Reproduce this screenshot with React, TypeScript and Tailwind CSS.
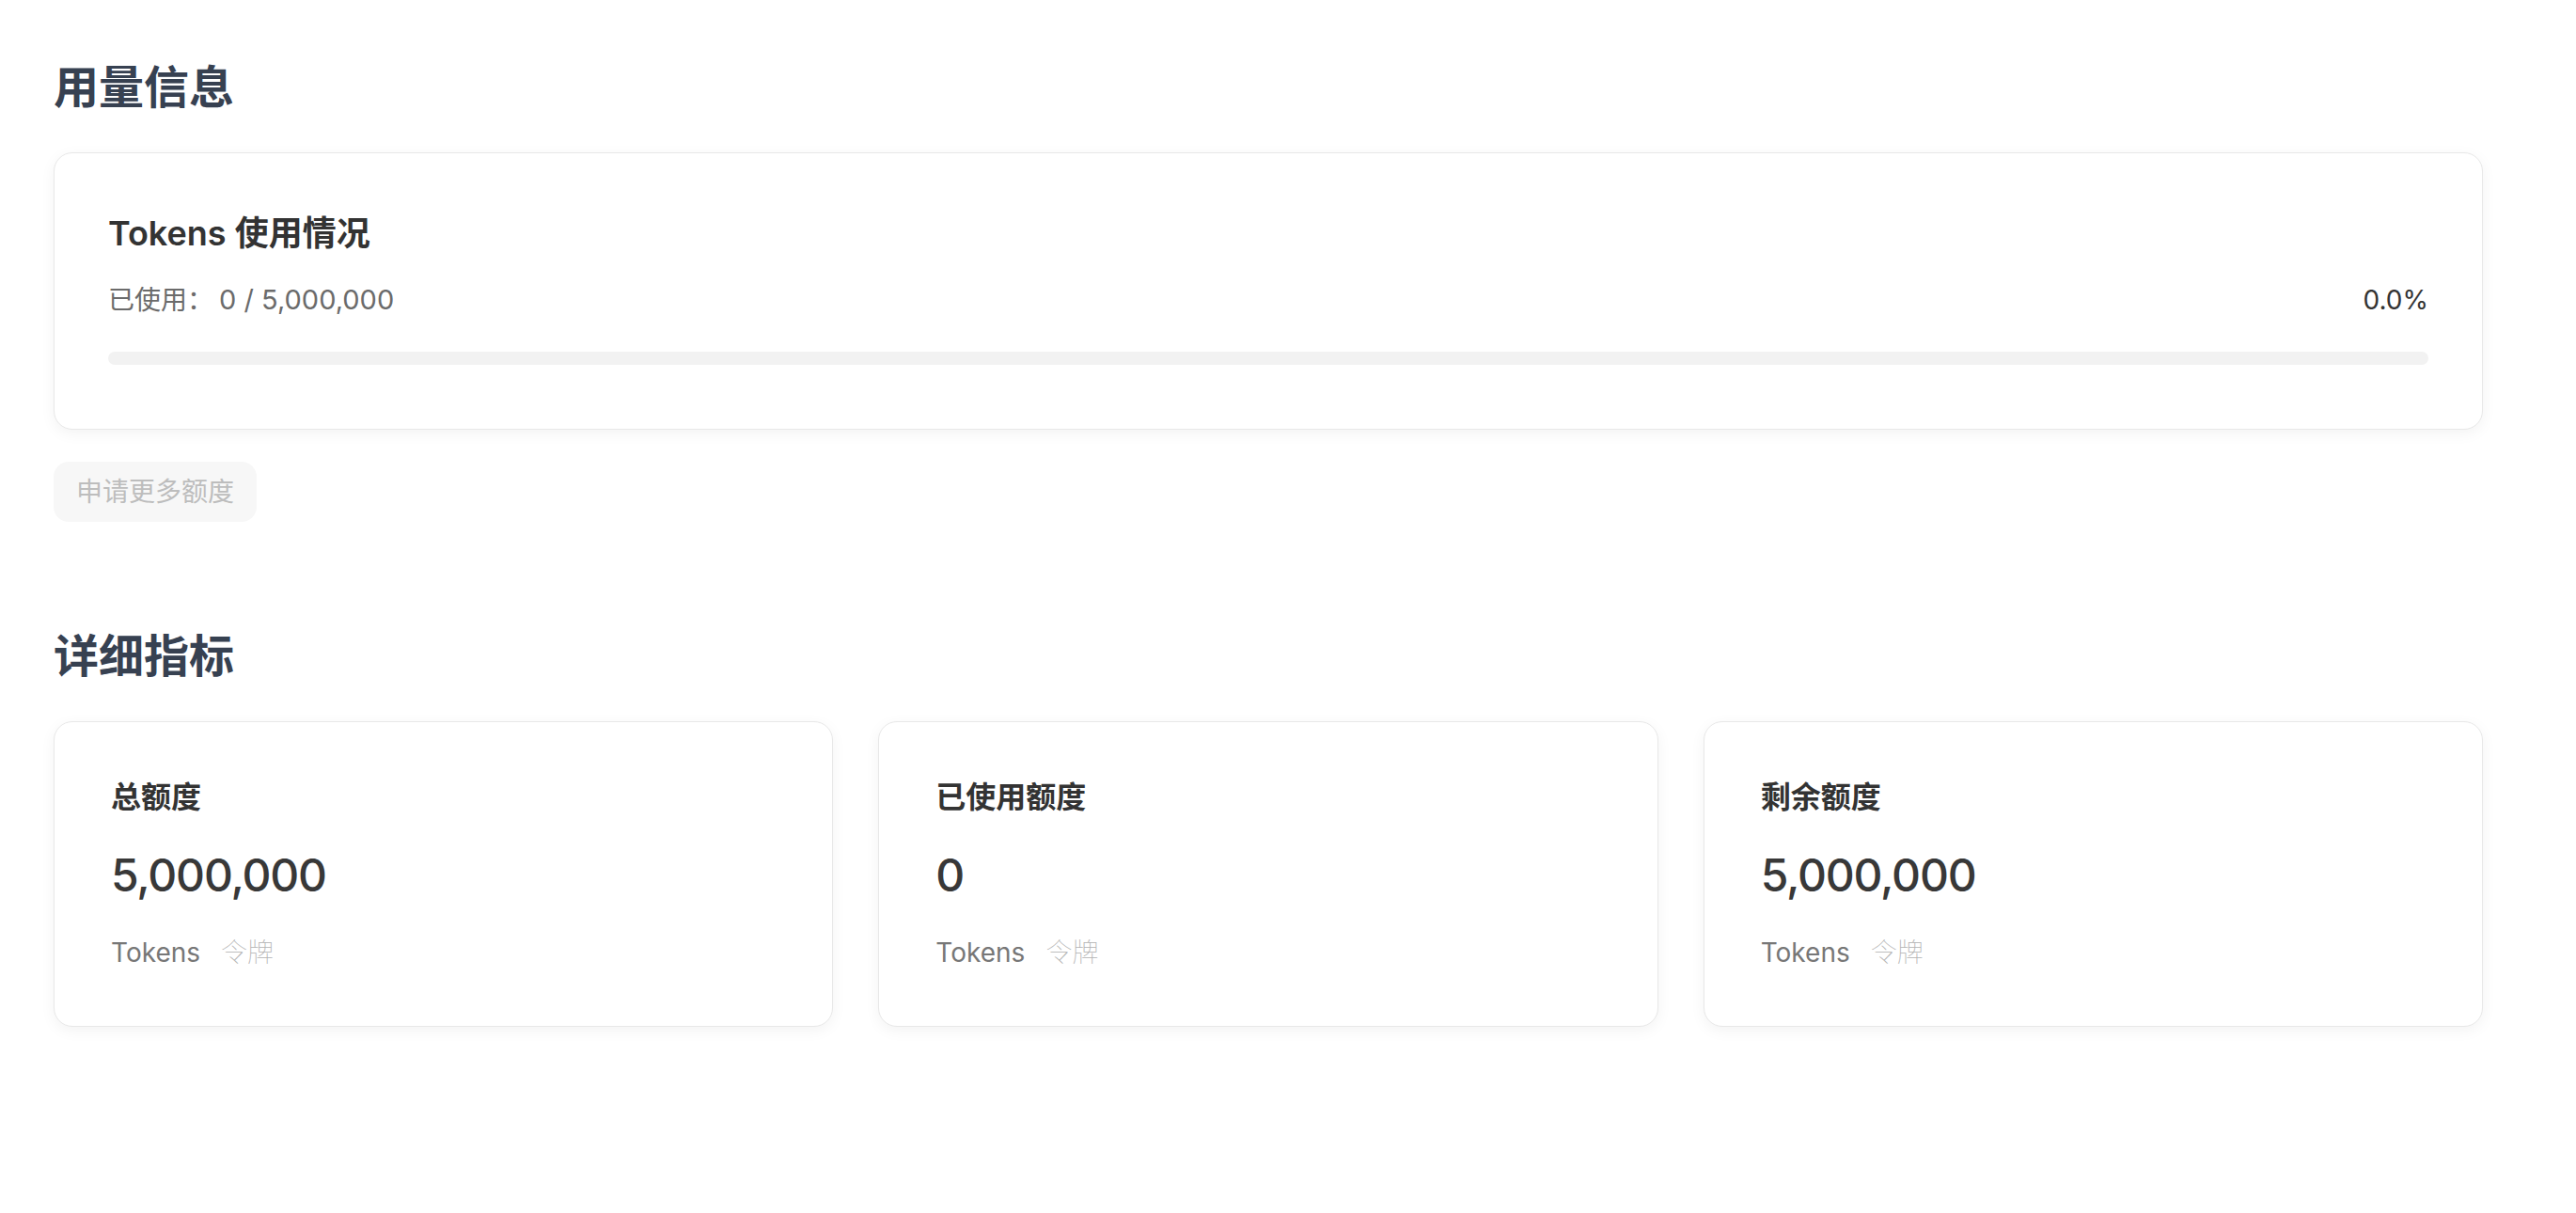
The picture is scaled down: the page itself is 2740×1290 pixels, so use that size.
import React from "react";

const metrics = [
  { label: "总额度", value: "5,000,000" },
  { label: "已使用额度", value: "0" },
  { label: "剩余额度", value: "5,000,000" },
];

function MetricCard({ label, value }: { label: string; value: string }) {
  return (
    <div className="rounded-[20px] border border-[#e8e8e8] bg-white px-[60px] pb-[58px] pt-[60px] shadow-[0_4px_16px_rgba(0,0,0,0.05)]">
      <div className="text-[32px] font-semibold leading-[40px] text-[#333333]">{label}</div>
      <div className="mt-[35px] text-[48px] font-medium leading-[56px] tracking-[-1.2px] text-[#383838]">{value}</div>
      <div className="mt-[34px] flex items-baseline text-[28px] leading-[40px]">
        <span className="text-[#777777]">Tokens</span>
        <span className="ml-[22px] font-thin text-[#b3b3b3]">令牌</span>
      </div>
    </div>
  );
}

export default function App() {
  const usedPct = 0;
  return (
    <div className="min-h-screen bg-white px-[57px] pt-[61px] font-[Inter,'Noto_Sans_CJK_SC',sans-serif]">
      <div className="max-w-[2584px]">
        <h2 className="text-[48px] font-semibold leading-[64px] text-[#374151]">用量信息</h2>

        <div className="mt-[37px] rounded-[20px] border border-[#e8e8e8] bg-white px-[57px] pb-[68px] pt-[61px] shadow-[0_4px_16px_rgba(0,0,0,0.05)]">
          <div className="text-[36px] font-semibold leading-[48px] text-[#333333]">Tokens 使用情况</div>
          <div className="mt-[27px] flex items-center justify-between text-[28px] leading-[40px]">
            <span className="text-[#6b6b6b]">
              已使用：<span className="ml-[6px] text-[29px]">0 / 5,000,000</span>
            </span>
            <span className="text-[#333333]">0.0%</span>
          </div>
          <div className="mt-[35px] h-[14px] w-full overflow-hidden rounded-full bg-[#f2f2f2]">
            <div className="h-full rounded-full bg-[#3b82f6]" style={{ width: `${usedPct}%` }} />
          </div>
        </div>

        <div className="mt-[34px] flex">
          <button className="flex h-[64px] items-center rounded-[16px] bg-[#f7f7f7] px-[24px] text-[28px] leading-[40px] text-[#bdbdbd]">
            申请更多额度
          </button>
        </div>

        <h2 className="mt-[111px] text-[48px] font-semibold leading-[64px] text-[#374151]">详细指标</h2>

        <div className="mt-[37px] grid grid-cols-3 gap-[48px]">
          {metrics.map((m) => (
            <MetricCard key={m.label} label={m.label} value={m.value} />
          ))}
        </div>
      </div>
    </div>
  );
}
